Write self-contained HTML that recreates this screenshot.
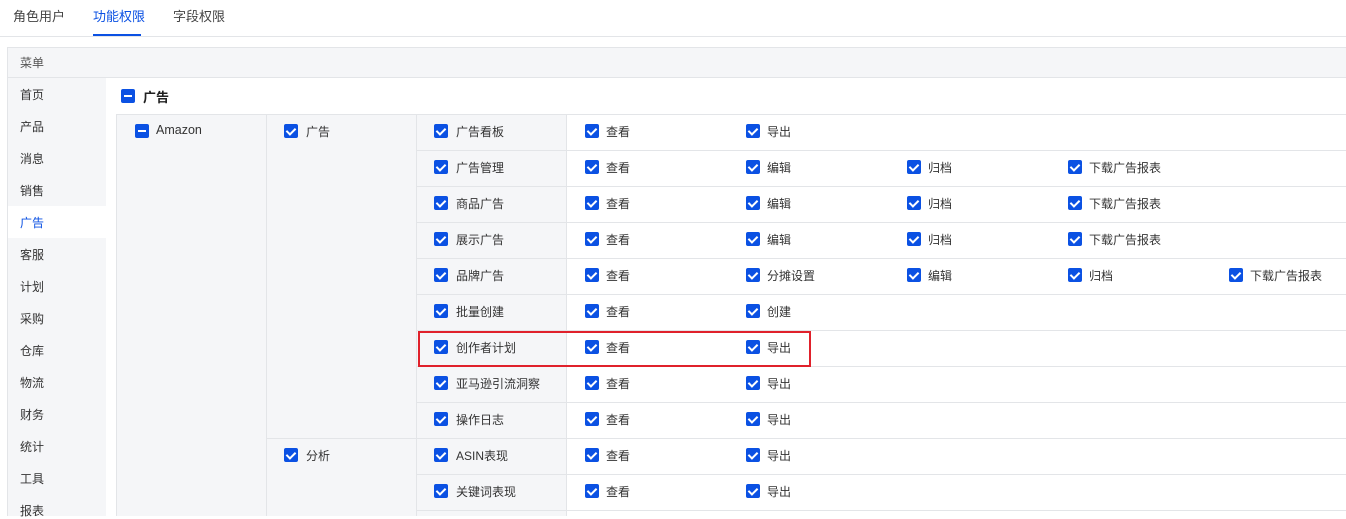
<!DOCTYPE html>
<html><head><meta charset="utf-8"><style>
*{box-sizing:border-box;margin:0;padding:0}
body{width:1346px;height:516px;overflow:hidden;background:#fff;font-family:"Liberation Sans","Noto Sans CJK SC",sans-serif;font-size:13px;color:#333;position:relative}
.a{position:absolute}
.tab{top:6px;font-size:13px;color:#444}
.cb{position:absolute;width:14px;height:14px;border-radius:2px;background:#0b51e3}
.cb::after{content:"";position:absolute;left:4px;top:1.5px;width:4px;height:7px;border:solid #fff;border-width:0 2px 2px 0;transform:rotate(45deg)}
.cb.m::after{left:3px;top:6px;width:8px;height:2px;border:0;background:#fff;transform:none}
.t{position:absolute;font-size:12px;color:#333;white-space:nowrap}
.hl{position:absolute;height:1px;background:#e3e5e8}
.vl{position:absolute;width:1px;background:#e3e5e8}
.side{position:absolute;left:20px;font-size:12px;color:#333}
</style></head><body>
<div class="a tab" style="left:13px">角色用户</div>
<div class="a tab" style="left:93px;color:#0b51e3">功能权限</div>
<div class="a tab" style="left:173px">字段权限</div>
<div class="a" style="left:93px;top:34px;width:48px;height:2px;background:#0b51e3"></div>
<div class="hl" style="left:0;top:36px;width:1346px"></div>

<div class="a" style="left:7px;top:47px;width:1350px;height:31px;background:#f5f6f8;border:1px solid #e3e5e8"></div>
<div class="t" style="left:20px;top:54px;color:#555">菜单</div>
<div class="a" style="left:7px;top:78px;width:99px;height:438px;background:#f5f6f8;border-left:1px solid #e3e5e8"></div>
<div class="a" style="left:8px;top:206px;width:98px;height:32px;background:#fff"></div>
<div class="side" style="top:86px">首页</div>
<div class="side" style="top:118px">产品</div>
<div class="side" style="top:150px">消息</div>
<div class="side" style="top:182px">销售</div>
<div class="side" style="top:214px;color:#0b51e3">广告</div>
<div class="side" style="top:246px">客服</div>
<div class="side" style="top:278px">计划</div>
<div class="side" style="top:310px">采购</div>
<div class="side" style="top:342px">仓库</div>
<div class="side" style="top:374px">物流</div>
<div class="side" style="top:406px">财务</div>
<div class="side" style="top:438px">统计</div>
<div class="side" style="top:470px">工具</div>
<div class="side" style="top:502px">报表</div>

<div class="cb m" style="left:121px;top:89px"></div>
<div class="t" style="left:143px;top:87px;font-size:13px;font-weight:bold;color:#222">广告</div>

<div class="a" style="left:116px;top:114px;width:450px;height:402px;background:#f5f6f8"></div>
<div class="hl" style="left:116px;top:114px;width:1230px"></div>
<div class="vl" style="left:116px;top:114px;height:402px"></div>
<div class="vl" style="left:266px;top:114px;height:402px"></div>
<div class="vl" style="left:416px;top:114px;height:402px"></div>
<div class="vl" style="left:566px;top:114px;height:402px"></div>
<div class="hl" style="left:266px;top:438px;width:1080px"></div>
<div id="rows"></div>

<div class="cb m" style="left:135px;top:124px"></div>
<div class="t" style="left:156px;top:123px;font-size:12.5px">Amazon</div>
<div class="cb" style="left:284px;top:124px"></div>
<div class="t" style="left:306px;top:123px">广告</div>
<div class="cb" style="left:284px;top:448px"></div>
<div class="t" style="left:306px;top:447px">分析</div>

<div class="a" style="left:418px;top:331px;width:393px;height:36px;border:2px solid #e0212b"></div>
<script>
var rows=[["广告看板",["查看","导出"]],["广告管理",["查看","编辑","归档","下载广告报表"]],["商品广告",["查看","编辑","归档","下载广告报表"]],["展示广告",["查看","编辑","归档","下载广告报表"]],["品牌广告",["查看","分摊设置","编辑","归档","下载广告报表"]],["批量创建",["查看","创建"]],["创作者计划",["查看","导出"]],["亚马逊引流洞察",["查看","导出"]],["操作日志",["查看","导出"]],["ASIN表现",["查看","导出"]],["关键词表现",["查看","导出"]]];
var h="";
rows.forEach(function(r,i){var y=114+36*i;
if(i>0&&i!=9)h+='<div class="hl" style="left:416px;top:'+y+'px;width:930px"></div>';
h+='<div class="cb" style="left:434px;top:'+(y+10)+'px"></div><div class="t" style="left:456px;top:'+(y+9)+'px">'+r[0]+'</div>';
r[1].forEach(function(p,j){var x=585+161*j;h+='<div class="cb" style="left:'+x+'px;top:'+(y+10)+'px"></div><div class="t" style="left:'+(x+21)+'px;top:'+(y+9)+'px">'+p+'</div>';});});
h+='<div class="hl" style="left:416px;top:510px;width:930px"></div>';
document.getElementById("rows").innerHTML=h;
</script>
</body></html>
